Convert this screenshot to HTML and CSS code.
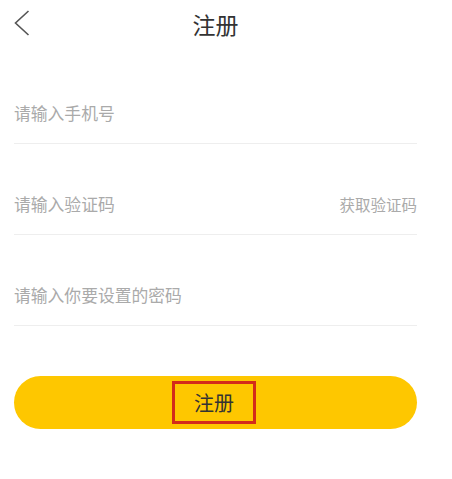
FILE: index.html
```html
<!DOCTYPE html>
<html lang="zh">
<head>
    <meta charset="UTF-8">
    <meta name="viewport" content="width=device-width, initial-scale=1.0">
    <title>注册</title>
    <link rel="stylesheet" href="styles.css">
</head>
<body>

    <!-- Cabecera -->
    <div class="header">
        <span class="back">
            <svg width="16" height="26" viewBox="0 0 16 26">
                <polyline points="14.5,1 1.5,13 14.5,25" fill="none" stroke="#555" stroke-width="1.6" />
            </svg>
        </span>
        <h1>注册</h1>
    </div>

    <div class="form">
        <div class="field">
            <input type="text" placeholder="请输入手机号" />
        </div>

        <div class="field">
            <input type="text" placeholder="请输入验证码" />
            <span class="code-link">获取验证码</span>
        </div>

        <div class="field">
            <input type="password" placeholder="请输入你要设置的密码" />
        </div>

        <button class="btn-register"><span class="btn-label">注册</span></button>
    </div>

</body>
</html>
```

FILE: styles.css
```css
body {
    font-family: "Noto Sans CJK SC", "Noto Sans", sans-serif;
    background-color: #fff;
    color: #333;
    margin: 0;
    padding: 0 35px 0 14px;
}

.header {
    height: 53px;
    display: flex;
    align-items: center;
    justify-content: center;
    position: relative;
}

.back {
    position: absolute;
    left: 0;
    top: 10px;
    line-height: 0;
}

h1 {
    margin: -5px 0 0 0;
    font-size: 23px;
    font-weight: normal;
    color: #333;
}

/* Campos */
.field {
    height: 91px;
    display: flex;
    align-items: flex-end;
    padding-bottom: 19px;
    box-sizing: border-box;
    border-bottom: 1px solid #eee;
}

.field input {
    flex: 1;
    border: none;
    outline: none;
    padding: 0;
    font-family: inherit;
    font-size: 16.8px;
    line-height: 22px;
    height: 22px;
    color: #333;
    background: transparent;
}

.field input::placeholder {
    color: #aaa;
}

.code-link {
    font-size: 15.5px;
    line-height: 22px;
    color: #aaa;
}

/* Botón */
.btn-register {
    display: flex;
    align-items: center;
    justify-content: center;
    width: 100%;
    height: 53px;
    margin-top: 50px;
    border: none;
    border-radius: 27px;
    background-color: #fec700;
    font-family: inherit;
    padding: 0;
}

.btn-label {
    font-size: 20px;
    color: #333;
    border: 3px solid #d32b1b;
    width: 78px;
    height: 37px;
    line-height: 37px;
    text-align: center;
    margin-left: -3px;
}
```
